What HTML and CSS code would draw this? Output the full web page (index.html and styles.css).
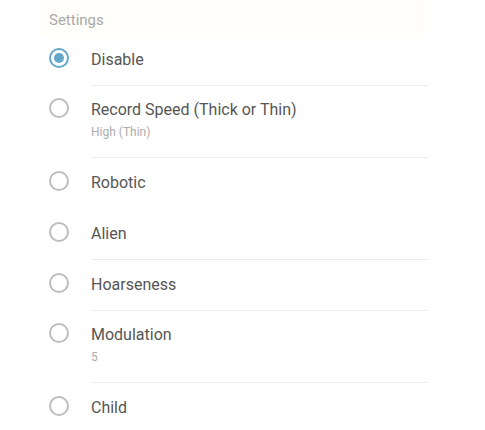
FILE: index.html
```html
<!DOCTYPE html>
<html>
<head>
<meta charset="utf-8">
<link rel="stylesheet" href="styles.css">
</head>
<body>
<div class="panel">
  <div class="header">Settings</div>
  <div class="list">
    <div class="row single">
      <span class="radio checked"></span>
      <div class="text"><div class="title">Disable</div></div>
    </div>
    <div class="row double">
      <span class="radio"></span>
      <div class="text"><div class="title">Record Speed (Thick or Thin)</div><div class="sub">High (Thin)</div></div>
    </div>
    <div class="row single nodiv">
      <span class="radio"></span>
      <div class="text"><div class="title">Robotic</div></div>
    </div>
    <div class="row single">
      <span class="radio"></span>
      <div class="text"><div class="title">Alien</div></div>
    </div>
    <div class="row single">
      <span class="radio"></span>
      <div class="text"><div class="title">Hoarseness</div></div>
    </div>
    <div class="row double">
      <span class="radio"></span>
      <div class="text"><div class="title">Modulation</div><div class="sub">5</div></div>
    </div>
    <div class="row single nodiv">
      <span class="radio"></span>
      <div class="text"><div class="title">Child</div></div>
    </div>
  </div>
</div>
</body>
</html>
```
FILE: styles.css
```css
html, body {
  margin: 0;
  padding: 0;
  background: #ffffff;
}
body {
  font-family: Roboto, "Liberation Sans", sans-serif;
  width: 485px;
  height: 430px;
  overflow: hidden;
}
.panel {
  padding: 0 57px 0 40px;
}
.header {
  height: 35px;
  padding: 11px 0 0 9px;
  box-sizing: border-box;
  font-size: 15px;
  line-height: 18px;
  color: #a9a9a9;
  background: #fffefa;
}
.row {
  display: flex;
  align-items: flex-start;
  padding-left: 9px;
}
.radio {
  flex: none;
  width: 20px;
  height: 20px;
  box-sizing: border-box;
  border: 2px solid #bdbdbd;
  border-radius: 50%;
  margin-right: 22px;
  position: relative;
}
.single .radio { margin-top: 13px; }
.double .radio { margin-top: 12px; }
.radio.checked {
  border-color: #63a7ca;
}
.radio.checked::after {
  content: "";
  position: absolute;
  left: 3px;
  top: 3px;
  width: 10px;
  height: 10px;
  border-radius: 50%;
  background: #63a7ca;
}
.text {
  flex: 1;
  box-sizing: border-box;
  border-bottom: 1px solid #ececec;
}
.nodiv .text { border-bottom-color: transparent; }
.single .text { height: 51px; padding-top: 16px; }
.double .text { height: 72px; padding-top: 15px; }
.title {
  font-size: 16px;
  line-height: 18px;
  color: #565656;
}
.sub {
  font-size: 12px;
  line-height: 14px;
  margin-top: 6px;
  color: #acacac;
}
```
